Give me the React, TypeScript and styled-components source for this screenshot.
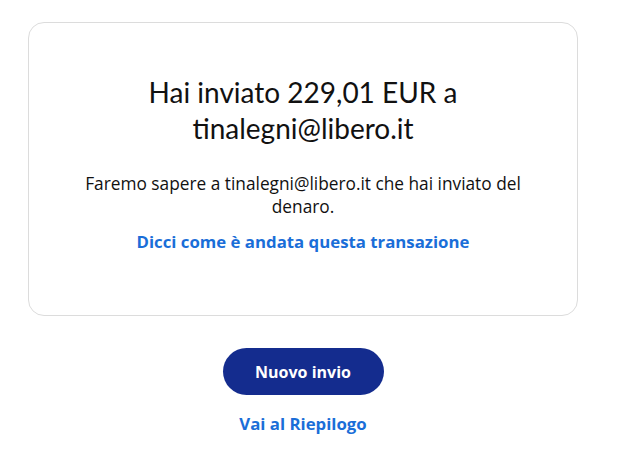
import React, { FC, ReactElement } from 'react';
import styled, { createGlobalStyle } from 'styled-components';

const GlobalStyle = createGlobalStyle`
body {
  margin: 0;
  background: #ffffff;
  font-family: 'Open Sans', 'Liberation Sans', sans-serif;
}
`

const Page = styled.div`
width: 550px;
margin-left: 28px;
padding-top: 22px;
display: flex;
flex-direction: column;
align-items: center;`

const Card = styled.div`
box-sizing: border-box;
width: 550px;
height: 294px;
border: 1px solid #dcdcdc;
border-radius: 16px;
padding: 51px 40px 0;
display: flex;
flex-direction: column;
align-items: center;
text-align: center;`

const Heading = styled.h1`
margin: 0;
font-family: 'Lato', 'Liberation Sans', sans-serif;
font-weight: 400;
font-size: 28px;
line-height: 36px;
color: #111111;
width: 340px;`

const Message = styled.p`
margin: 26px 0 0;
font-size: 17.3px;
line-height: 23px;
color: #111111;
width: 460px;`

const Link = styled.a<{ $top: number }>`
display: block;
margin-top: ${p => p.$top}px;
font-weight: 700;
font-size: 16.8px;
line-height: 24px;
color: #1a6ed8;
text-decoration: none;
cursor: pointer;`

const Button = styled.button`
margin-top: 32px;
width: 161px;
height: 47px;
border: none;
border-radius: 24px;
background: #142c8e;
color: #ffffff;
font-family: 'Open Sans', 'Liberation Sans', sans-serif;
font-weight: 700;
font-size: 16px;
cursor: pointer;`

const App: FC = (): ReactElement => {
    return (
        <>
            <GlobalStyle />
            <Page>
                <Card>
                    <Heading>Hai inviato 229,01 EUR a tinalegni@libero.it</Heading>
                    <Message>Faremo sapere a tinalegni@libero.it che hai inviato del denaro.</Message>
                    <Link $top={12}>Dicci come è andata questa transazione</Link>
                </Card>
                <Button>Nuovo invio</Button>
                <Link $top={17}>Vai al Riepilogo</Link>
            </Page>
        </>
    )
}
export default App;
